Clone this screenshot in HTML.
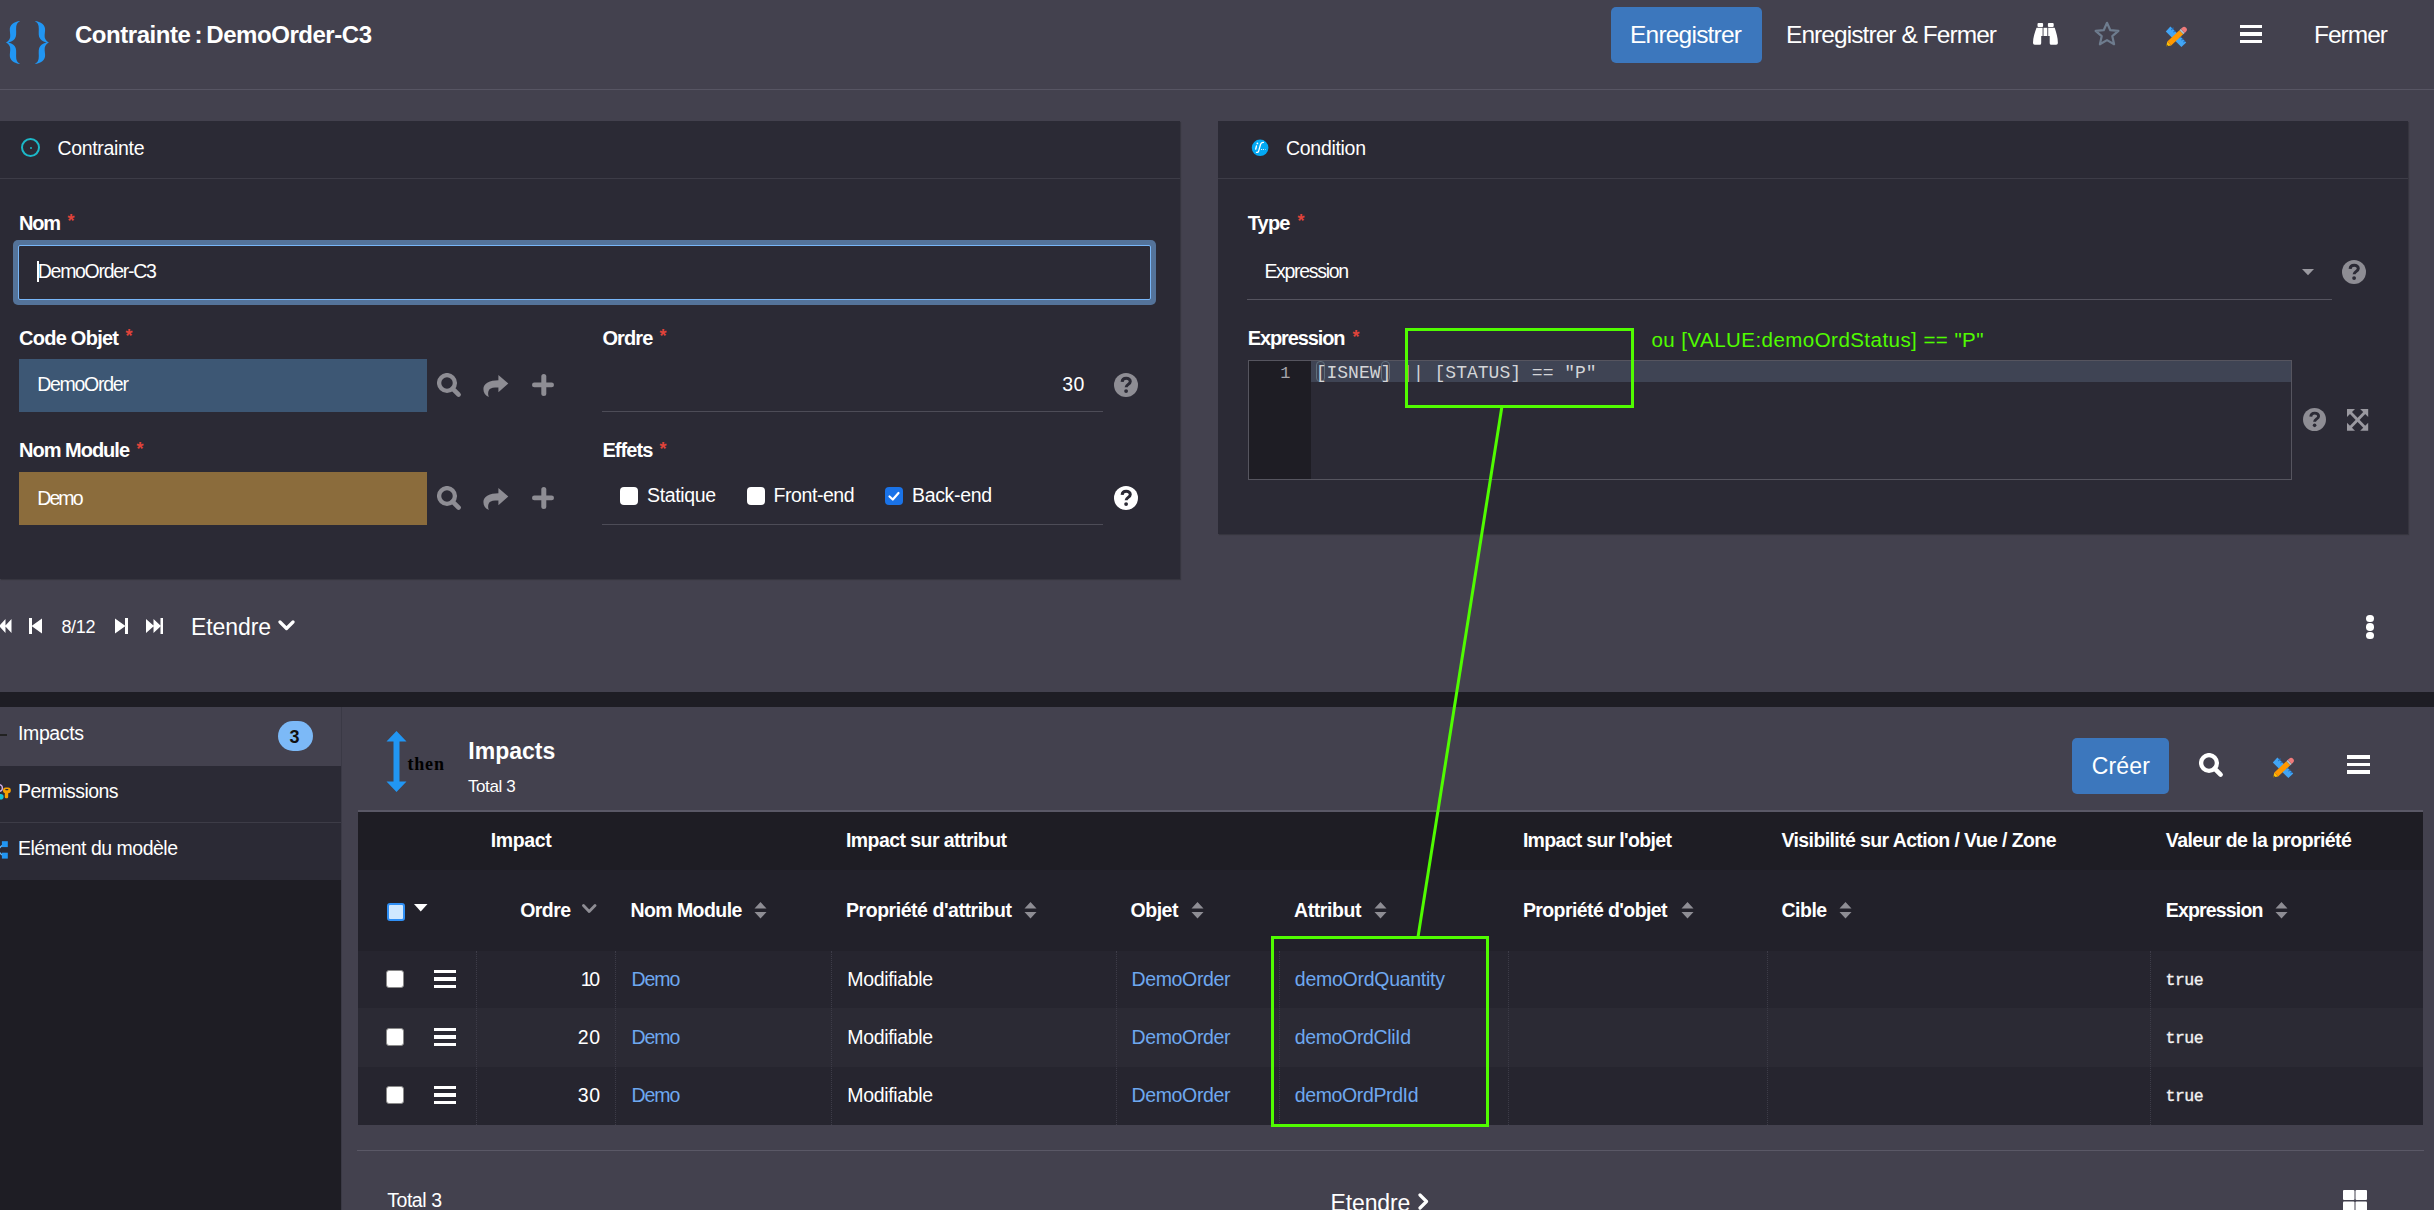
<!DOCTYPE html><html><head><meta charset="utf-8"><style>
html,body{margin:0;padding:0;width:2434px;height:1210px;overflow:hidden;background:#43414e;}
body{position:relative;font-family:"Liberation Sans",sans-serif;}
body div{position:absolute;box-sizing:border-box;}
</style></head><body>
<div style="left:0px;top:89px;width:2434px;height:1px;background:#575563;"></div>
<svg style="position:absolute;left:0px;top:0px;" width="60" height="75" viewBox="0 0 60 75"><path fill="#2196f3" d="M20.2 21 C14 21.6 9.6 24.6 9.8 30 C10 34 10.8 36.6 9.6 39 C8.6 40.8 7.2 42 5.9 42.5 C7.2 43 8.6 44.2 9.6 46 C10.8 48.4 10 51 9.8 55 C9.6 60.4 14 63.4 20.2 64 C17.4 62.8 16 60.4 16.1 56 C16.2 51.6 16.6 48.6 14.6 46 C13.2 44.2 10.6 43 8.2 42.5 C10.6 42 13.2 40.8 14.6 39 C16.6 36.4 16.2 33.4 16.1 29 C16 24.6 17.4 22.2 20.2 21Z"/><path fill="#2196f3" transform="translate(54.9,0) scale(-1,1)" d="M20.2 21 C14 21.6 9.6 24.6 9.8 30 C10 34 10.8 36.6 9.6 39 C8.6 40.8 7.2 42 5.9 42.5 C7.2 43 8.6 44.2 9.6 46 C10.8 48.4 10 51 9.8 55 C9.6 60.4 14 63.4 20.2 64 C17.4 62.8 16 60.4 16.1 56 C16.2 51.6 16.6 48.6 14.6 46 C13.2 44.2 10.6 43 8.2 42.5 C10.6 42 13.2 40.8 14.6 39 C16.6 36.4 16.2 33.4 16.1 29 C16 24.6 17.4 22.2 20.2 21Z"/></svg>
<div style="left:75.00px;top:22.68px;font-size:24px;line-height:24px;color:#fff;font-family:'Liberation Sans', sans-serif;white-space:pre;font-weight:bold;letter-spacing:-0.460px;word-spacing:-2px;">Contrainte : DemoOrder-C3</div>
<div style="left:1611px;top:7px;width:151px;height:56px;background:#3c77bd;border-radius:5px;"></div>
<div style="left:1630.00px;top:23.26px;font-size:24.5px;line-height:24.5px;color:#fff;font-family:'Liberation Sans', sans-serif;white-space:pre;letter-spacing:-0.782px;">Enregistrer</div>
<div style="left:1786.00px;top:23.26px;font-size:24.5px;line-height:24.5px;color:#fff;font-family:'Liberation Sans', sans-serif;white-space:pre;letter-spacing:-0.932px;">Enregistrer &amp; Fermer</div>
<svg style="position:absolute;left:2028px;top:18px;" width="36" height="32" viewBox="0 0 36 32"><g fill="#fff"><rect x="9.5" y="4.9" width="5.6" height="4.1" rx="1"/><rect x="19.9" y="4.9" width="5.8" height="4.1" rx="1"/>
<path d="M8.5 9.8 H14.6 V18 H13.2 V25.2 Q13.2 26.7 11.7 26.7 H6.7 Q5 26.7 5 25 C5 19.5 6.7 15 8.5 9.8Z"/>
<rect x="15.5" y="9.8" width="3.8" height="8.2"/>
<path d="M26.7 9.8 C28.3 15 29.9 19.5 29.9 25 Q29.9 26.7 28.2 26.7 H23.2 Q21.7 26.7 21.7 25.2 V18 H20.2 V9.8Z"/></g></svg>
<svg style="position:absolute;left:2093px;top:21px;" width="28" height="26" viewBox="0 0 28 26"><path fill="none" stroke="#6e7c8e" stroke-width="2.2" stroke-linejoin="round" d="M14 1.8 L17.3 9.2 L25.4 9.9 L19.3 15.2 L21.1 23.3 L14 19.1 L6.9 23.3 L8.7 15.2 L2.6 9.9 L10.7 9.2 Z"/></svg>
<svg style="position:absolute;left:2160px;top:20px;" width="32" height="32" viewBox="0 0 32 32"><path fill="#42a5f5" d="M10.4 6.6 L26.2 22.5 L21.4 27.1 L5.8 11.5Z"/>
<g stroke="#1e6fc0" stroke-width="1.1" stroke-linecap="round"><line x1="11.6" y1="9.6" x2="13.2" y2="8.0"/><line x1="13.8" y1="11.8" x2="14.8" y2="10.8"/><line x1="19.6" y1="17.6" x2="21.2" y2="16"/><line x1="21.8" y1="19.8" x2="22.8" y2="18.8"/><line x1="23.8" y1="21.8" x2="24.6" y2="21"/></g>
<g transform="translate(6.3,26.2) rotate(-42.9)"><path d="M0 0 L4 -2.8 V2.8Z" fill="#ffc107"/><path d="M0 0 L1.6 -1.1 V1.1Z" fill="#5d4a1f"/><rect x="4" y="-2.8" width="16.5" height="5.6" fill="#ff9800"/><rect x="20.5" y="-2.8" width="2" height="5.6" fill="#b0bec5"/><path d="M22.5 -2.8 H24.2 A2.8 2.8 0 0 1 24.2 2.8 H22.5Z" fill="#ef7a7a"/></g></svg>
<div style="left:2240px;top:24.60px;width:22px;height:3.6px;background:#fff;"></div>
<div style="left:2240px;top:32.10px;width:22px;height:3.6px;background:#fff;"></div>
<div style="left:2240px;top:39.60px;width:22px;height:3.6px;background:#fff;"></div>
<div style="left:2314.00px;top:23.26px;font-size:24.5px;line-height:24.5px;color:#fff;font-family:'Liberation Sans', sans-serif;white-space:pre;letter-spacing:-0.988px;">Fermer</div>
<div style="left:0px;top:121px;width:1180px;height:458px;background:#2b2a35;box-shadow:1px 1px 1px rgba(0,0,0,0.18);"></div>
<div style="left:0px;top:178px;width:1180px;height:1px;background:#3d3c47;"></div>
<div style="left:21px;top:138px;width:19px;height:19px;border:2px solid #1cb8c8;border-radius:50%;"></div>
<div style="left:29.5px;top:146.5px;width:2.5px;height:2.5px;background:#1cb8c8;border-radius:50%;"></div>
<div style="left:57.50px;top:139.49px;font-size:19.5px;line-height:19.5px;color:#fff;font-family:'Liberation Sans', sans-serif;white-space:pre;letter-spacing:-0.330px;">Contrainte</div>
<div style="left:19.00px;top:213.07px;font-size:20px;line-height:20px;color:#fff;font-family:'Liberation Sans', sans-serif;white-space:pre;font-weight:bold;letter-spacing:-1.222px;">Nom</div>
<div style="left:67.50px;top:212.26px;font-size:18px;line-height:18px;color:#e0433a;font-family:'Liberation Sans', sans-serif;white-space:pre;font-weight:bold;">*</div>
<div style="left:13px;top:240px;width:1143px;height:65px;background:#54739a;border-radius:5px;"></div>
<div style="left:18px;top:245px;width:1133px;height:55px;background:#2b2a35;border:1px solid #78b6f8;border-radius:2px;"></div>
<div style="left:37px;top:261px;width:2px;height:21px;background:#fff;"></div>
<div style="left:37.80px;top:261.79px;font-size:19.5px;line-height:19.5px;color:#fff;font-family:'Liberation Sans', sans-serif;white-space:pre;letter-spacing:-1.299px;">DemoOrder-C3</div>
<div style="left:19.00px;top:327.67px;font-size:20px;line-height:20px;color:#fff;font-family:'Liberation Sans', sans-serif;white-space:pre;font-weight:bold;letter-spacing:-0.741px;">Code Objet</div>
<div style="left:125.50px;top:326.86px;font-size:18px;line-height:18px;color:#e0433a;font-family:'Liberation Sans', sans-serif;white-space:pre;font-weight:bold;">*</div>
<div style="left:19px;top:359px;width:408px;height:53px;background:#3d5774;"></div>
<div style="left:37.20px;top:375.49px;font-size:19.5px;line-height:19.5px;color:#fff;font-family:'Liberation Sans', sans-serif;white-space:pre;letter-spacing:-1.271px;">DemoOrder</div>
<div style="left:19.00px;top:440.47px;font-size:20px;line-height:20px;color:#fff;font-family:'Liberation Sans', sans-serif;white-space:pre;font-weight:bold;letter-spacing:-0.999px;">Nom Module</div>
<div style="left:136.50px;top:439.66px;font-size:18px;line-height:18px;color:#e0433a;font-family:'Liberation Sans', sans-serif;white-space:pre;font-weight:bold;">*</div>
<div style="left:19px;top:472px;width:408px;height:53px;background:#8b6c3c;"></div>
<div style="left:37.20px;top:488.79px;font-size:19.5px;line-height:19.5px;color:#fff;font-family:'Liberation Sans', sans-serif;white-space:pre;letter-spacing:-1.873px;">Demo</div>
<svg style="position:absolute;left:437px;top:373px;" width="26" height="26" viewBox="0 0 26 26"><circle cx="10" cy="10" r="7.9" fill="none" stroke="#8e8d94" stroke-width="4.3"/><line x1="15.6" y1="15.6" x2="21.6" y2="21.6" stroke="#8e8d94" stroke-width="4.6" stroke-linecap="round"/></svg>
<svg style="position:absolute;left:483px;top:374px;" width="30" height="26" viewBox="0 0 30 26"><path fill="#8e8d94" d="M25.3 9.6 L15.4 1.1 V6.2 C7 6.2 0.4 9 0.4 15 C0.4 19 2.5 21.5 5.8 23 C4.8 20.5 4.8 17 6.5 15.2 C8 13.8 10.5 13.4 15.4 13.4 V18.2 Z"/></svg>
<svg style="position:absolute;left:531.5px;top:374px;" width="24" height="23" viewBox="0 0 24 23"><rect x="9.3" y="0" width="5" height="22" rx="2.5" fill="#8e8d94"/><rect x="0" y="8.5" width="22" height="4.8" rx="2.4" fill="#8e8d94"/></svg>
<svg style="position:absolute;left:437px;top:486px;" width="26" height="26" viewBox="0 0 26 26"><circle cx="10" cy="10" r="7.9" fill="none" stroke="#8e8d94" stroke-width="4.3"/><line x1="15.6" y1="15.6" x2="21.6" y2="21.6" stroke="#8e8d94" stroke-width="4.6" stroke-linecap="round"/></svg>
<svg style="position:absolute;left:483px;top:487px;" width="30" height="26" viewBox="0 0 30 26"><path fill="#8e8d94" d="M25.3 9.6 L15.4 1.1 V6.2 C7 6.2 0.4 9 0.4 15 C0.4 19 2.5 21.5 5.8 23 C4.8 20.5 4.8 17 6.5 15.2 C8 13.8 10.5 13.4 15.4 13.4 V18.2 Z"/></svg>
<svg style="position:absolute;left:531.5px;top:487px;" width="24" height="23" viewBox="0 0 24 23"><rect x="9.3" y="0" width="5" height="22" rx="2.5" fill="#8e8d94"/><rect x="0" y="8.5" width="22" height="4.8" rx="2.4" fill="#8e8d94"/></svg>
<div style="left:602.40px;top:327.67px;font-size:20px;line-height:20px;color:#fff;font-family:'Liberation Sans', sans-serif;white-space:pre;font-weight:bold;letter-spacing:-0.866px;">Ordre</div>
<div style="left:659.50px;top:326.86px;font-size:18px;line-height:18px;color:#e0433a;font-family:'Liberation Sans', sans-serif;white-space:pre;font-weight:bold;">*</div>
<div style="left:1062.30px;top:375.49px;font-size:19.5px;line-height:19.5px;color:#fff;font-family:'Liberation Sans', sans-serif;white-space:pre;letter-spacing:0.309px;">30</div>
<div style="left:602px;top:411px;width:501px;height:1px;background:#4d4c57;"></div>
<svg style="position:absolute;left:1112.7px;top:372.0px;" width="26" height="26" viewBox="0 0 26 26"><g transform="translate(13.0,13.0) scale(1.0)"><circle r="12" fill="#8e8d94"/><path d="M-3.9 -3.1 C-3.7 -5.5 -1.9 -6.7 0.2 -6.7 C2.6 -6.7 4.3 -5.4 4.3 -3.4 C4.3 -0.8 0.1 -0.4 0.1 2.3" fill="none" stroke="#2b2a35" stroke-width="3" stroke-linecap="butt"/><circle cx="0.1" cy="6.1" r="1.9" fill="#2b2a35"/></g></svg>
<div style="left:602.40px;top:440.47px;font-size:20px;line-height:20px;color:#fff;font-family:'Liberation Sans', sans-serif;white-space:pre;font-weight:bold;letter-spacing:-0.913px;">Effets</div>
<div style="left:659.50px;top:439.66px;font-size:18px;line-height:18px;color:#e0433a;font-family:'Liberation Sans', sans-serif;white-space:pre;font-weight:bold;">*</div>
<div style="left:620px;top:487px;width:18px;height:18px;background:#fff;border-radius:4px;"></div>
<div style="left:647.00px;top:485.69px;font-size:19.5px;line-height:19.5px;color:#fff;font-family:'Liberation Sans', sans-serif;white-space:pre;letter-spacing:-0.365px;">Statique</div>
<div style="left:747px;top:487px;width:18px;height:18px;background:#fff;border-radius:4px;"></div>
<div style="left:773.60px;top:485.69px;font-size:19.5px;line-height:19.5px;color:#fff;font-family:'Liberation Sans', sans-serif;white-space:pre;letter-spacing:-0.443px;">Front-end</div>
<div style="left:885px;top:487px;width:18px;height:18px;background:#1a73e8;border-radius:4px;"></div>
<svg style="position:absolute;left:885px;top:487px;" width="18" height="18" viewBox="0 0 18 18"><path d="M4.5 9.5 L7.8 12.5 L13.5 6" fill="none" stroke="#fff" stroke-width="2.2" stroke-linecap="round" stroke-linejoin="round"/></svg>
<div style="left:912.00px;top:485.69px;font-size:19.5px;line-height:19.5px;color:#fff;font-family:'Liberation Sans', sans-serif;white-space:pre;letter-spacing:-0.340px;">Back-end</div>
<svg style="position:absolute;left:1112.7px;top:485.0px;" width="26" height="26" viewBox="0 0 26 26"><g transform="translate(13.0,13.0) scale(1.0)"><circle r="12" fill="#fff"/><path d="M-3.9 -3.1 C-3.7 -5.5 -1.9 -6.7 0.2 -6.7 C2.6 -6.7 4.3 -5.4 4.3 -3.4 C4.3 -0.8 0.1 -0.4 0.1 2.3" fill="none" stroke="#2b2a35" stroke-width="3" stroke-linecap="butt"/><circle cx="0.1" cy="6.1" r="1.9" fill="#2b2a35"/></g></svg>
<div style="left:602px;top:524px;width:501px;height:1px;background:#4d4c57;"></div>
<div style="left:1218px;top:121px;width:1190px;height:413px;background:#2b2a35;box-shadow:1px 1px 1px rgba(0,0,0,0.18);"></div>
<div style="left:1218px;top:178px;width:1190px;height:1px;background:#3d3c47;"></div>
<svg style="position:absolute;left:1245px;top:132px;" width="35" height="30" viewBox="0 0 35 30"><circle cx="15.1" cy="15.8" r="8.3" fill="#03a9f4"/><g fill="none" stroke="#fff" stroke-linecap="round"><path d="M18.4 10.4 C16.8 10.2 15.9 11 15.5 12.5 L13.5 19.6 C13.2 20.4 12.5 20.6 11.5 20.3" stroke-width="1.3"/><path d="M11.5 13.9 L10.7 17.1" stroke-width="1.4"/></g><g fill="#fff"><circle cx="12.4" cy="11.4" r="0.9"/><circle cx="16.5" cy="17.5" r="0.6"/><circle cx="18.4" cy="17.5" r="0.6"/><circle cx="20.5" cy="17.5" r="0.5" fill-opacity="0.6"/></g></svg>
<div style="left:1286.00px;top:139.29px;font-size:19.5px;line-height:19.5px;color:#fff;font-family:'Liberation Sans', sans-serif;white-space:pre;letter-spacing:-0.299px;">Condition</div>
<div style="left:1247.70px;top:213.07px;font-size:20px;line-height:20px;color:#fff;font-family:'Liberation Sans', sans-serif;white-space:pre;font-weight:bold;letter-spacing:-0.798px;">Type</div>
<div style="left:1297.50px;top:212.26px;font-size:18px;line-height:18px;color:#e0433a;font-family:'Liberation Sans', sans-serif;white-space:pre;font-weight:bold;">*</div>
<div style="left:1264.40px;top:261.99px;font-size:19.5px;line-height:19.5px;color:#fff;font-family:'Liberation Sans', sans-serif;white-space:pre;letter-spacing:-1.296px;">Expression</div>
<div style="left:1247px;top:299px;width:1085px;height:1px;background:#55545f;"></div>
<svg style="position:absolute;left:2302px;top:269px;" width="13" height="8" viewBox="0 0 13 8"><path d="M0 0 H12 L6 6.2Z" fill="#9a99a0"/></svg>
<svg style="position:absolute;left:2341.0px;top:259.0px;" width="26" height="26" viewBox="0 0 26 26"><g transform="translate(13.0,13.0) scale(1.0)"><circle r="12" fill="#8e8d94"/><path d="M-3.9 -3.1 C-3.7 -5.5 -1.9 -6.7 0.2 -6.7 C2.6 -6.7 4.3 -5.4 4.3 -3.4 C4.3 -0.8 0.1 -0.4 0.1 2.3" fill="none" stroke="#2b2a35" stroke-width="3" stroke-linecap="butt"/><circle cx="0.1" cy="6.1" r="1.9" fill="#2b2a35"/></g></svg>
<div style="left:1247.70px;top:328.47px;font-size:20px;line-height:20px;color:#fff;font-family:'Liberation Sans', sans-serif;white-space:pre;font-weight:bold;letter-spacing:-1.114px;">Expression</div>
<div style="left:1352.50px;top:327.66px;font-size:18px;line-height:18px;color:#e0433a;font-family:'Liberation Sans', sans-serif;white-space:pre;font-weight:bold;">*</div>
<div style="left:1248px;top:360px;width:1044px;height:120px;border:1px solid #56555f;background:#2b2a35;"></div>
<div style="left:1249px;top:361px;width:62px;height:118px;background:#1e1d24;"></div>
<div style="left:1311px;top:361px;width:980px;height:21px;background:#3f4454;"></div>
<div style="left:1280.30px;top:364.98px;font-size:17px;line-height:17px;color:#a5a5ab;font-family:'Liberation Mono', monospace;white-space:pre;">1</div>
<div style="left:1315.5px;top:361px;width:9.5px;height:20.5px;border:1px solid #5f6f7c;border-radius:4px;"></div>
<div style="left:1380.5px;top:361px;width:9.5px;height:20.5px;border:1px solid #5f6f7c;border-radius:4px;"></div>
<div style="left:1315.70px;top:363.71px;font-size:18px;line-height:18px;color:#d4d5d8;font-family:'Liberation Mono', monospace;white-space:pre;letter-spacing:0.005px;">[ISNEW] || [STATUS] == &quot;P&quot;</div>
<svg style="position:absolute;left:2301.8px;top:407.3px;" width="25" height="25" viewBox="0 0 25 25"><g transform="translate(12.5,12.5) scale(0.9583333333333334)"><circle r="12" fill="#8e8d94"/><path d="M-3.9 -3.1 C-3.7 -5.5 -1.9 -6.7 0.2 -6.7 C2.6 -6.7 4.3 -5.4 4.3 -3.4 C4.3 -0.8 0.1 -0.4 0.1 2.3" fill="none" stroke="#2b2a35" stroke-width="3" stroke-linecap="butt"/><circle cx="0.1" cy="6.1" r="1.9" fill="#2b2a35"/></g></svg>
<svg style="position:absolute;left:2347px;top:409px;" width="22" height="22" viewBox="0 0 22 22"><g fill="#9a99a0"><path d="M0 0 H8 L0 8Z"/><path d="M21.2 0 V8 L13.2 0Z"/><path d="M0 21.8 V13.8 L8 21.8Z"/><path d="M21.2 21.8 H13.2 L21.2 13.8Z"/></g><g stroke="#9a99a0" stroke-width="2.8"><line x1="2.5" y1="2.5" x2="18.7" y2="19.3"/><line x1="18.7" y1="2.5" x2="2.5" y2="19.3"/></g></svg>
<svg style="position:absolute;left:0px;top:618px;left:-3px;" width="16" height="16" viewBox="0 0 16 16"><path fill="#fff" d="M0 0 H2.5 V16 H0Z M2 8 L8.5 1 V15Z M8 8 L14.5 1 V15Z"/></svg>
<svg style="position:absolute;left:29px;top:618px;" width="14" height="16" viewBox="0 0 14 16"><path fill="#fff" d="M0 0 H3 V16 H0Z M2.5 8 L13 0.5 V15.5Z"/></svg>
<svg style="position:absolute;left:114px;top:618px;" width="14" height="16" viewBox="0 0 14 16"><path fill="#fff" d="M11 0 H14 V16 H11Z M11.5 8 L1 0.5 V15.5Z"/></svg>
<svg style="position:absolute;left:143.5px;top:618px;" width="20" height="16" viewBox="0 0 20 16"><path fill="#fff" d="M16.5 0 H19 V16 H16.5Z M17 8 L9.5 1 V15Z M10 8 L2 1 V15Z"/></svg>
<div style="left:61.40px;top:618.16px;font-size:18px;line-height:18px;color:#fff;font-family:'Liberation Sans', sans-serif;white-space:pre;letter-spacing:-0.346px;">8/12</div>
<div style="left:191.00px;top:615.53px;font-size:23px;line-height:23px;color:#fff;font-family:'Liberation Sans', sans-serif;white-space:pre;letter-spacing:-0.093px;">Etendre</div>
<svg style="position:absolute;left:278px;top:620px;" width="17" height="12" viewBox="0 0 17 12"><path d="M2 2 L8.5 8.5 L15 2" fill="none" stroke="#fff" stroke-width="3.2" stroke-linecap="round" stroke-linejoin="round"/></svg>
<div style="left:2366.3px;top:614.9px;width:7.6px;height:7.6px;background:#fff;border-radius:50%;"></div>
<div style="left:2366.3px;top:623.4px;width:7.6px;height:7.6px;background:#fff;border-radius:50%;"></div>
<div style="left:2366.3px;top:631.9px;width:7.6px;height:7.6px;background:#fff;border-radius:50%;"></div>
<div style="left:0px;top:692px;width:2434px;height:15px;background:#1e1d24;"></div>
<div style="left:0px;top:707px;width:341px;height:58px;background:#43414e;"></div>
<div style="left:0px;top:766px;width:341px;height:56px;background:#2b2a35;"></div>
<div style="left:0px;top:822px;width:341px;height:1px;background:#3d3c47;"></div>
<div style="left:0px;top:823px;width:341px;height:57px;background:#2b2a35;"></div>
<div style="left:0px;top:880px;width:341px;height:330px;background:#1e1d24;"></div>
<div style="left:341px;top:707px;width:1px;height:503px;background:#3a3945;"></div>
<div style="left:18.00px;top:724.49px;font-size:19.5px;line-height:19.5px;color:#fff;font-family:'Liberation Sans', sans-serif;white-space:pre;letter-spacing:-0.379px;">Impacts</div>
<div style="left:18.00px;top:782.29px;font-size:19.5px;line-height:19.5px;color:#fff;font-family:'Liberation Sans', sans-serif;white-space:pre;letter-spacing:-0.570px;">Permissions</div>
<div style="left:18.00px;top:838.89px;font-size:19.5px;line-height:19.5px;color:#fff;font-family:'Liberation Sans', sans-serif;white-space:pre;letter-spacing:-0.501px;">Elément du modèle</div>
<div style="left:278px;top:721px;width:35px;height:30px;background:#7cb9f7;border-radius:15px;"></div>
<div style="left:289.50px;top:727.76px;font-size:18px;line-height:18px;color:#111;font-family:'Liberation Sans', sans-serif;white-space:pre;font-weight:bold;">3</div>
<svg style="position:absolute;left:0px;top:733px;" width="8" height="5" viewBox="0 0 8 5"><rect x="0" y="1" width="7" height="2" fill="#222"/></svg>
<svg style="position:absolute;left:0px;top:775px;" width="20" height="90" viewBox="0 0 20 90"><circle cx="-1" cy="13" r="3.4" fill="none" stroke="#d4b0e6" stroke-width="1.4"/><ellipse cx="0.8" cy="21.8" rx="2.8" ry="2.8" fill="#17c3d6"/>
<rect x="3" y="12.6" width="7.8" height="5.6" rx="2.6" fill="#f5a000"/><rect x="5.2" y="13.9" width="3.2" height="1.3" rx="0.6" fill="#2b2a35"/><rect x="4.8" y="17.5" width="3.4" height="5.8" rx="1.2" fill="#f5a000"/>
<rect x="1.9" y="66.2" width="5.9" height="5.9" fill="#2196f3"/><rect x="1.9" y="77.7" width="5.9" height="5.9" fill="#2196f3"/><path d="M-2 74.5 L2 70.5 M-2 76 L2 80" stroke="#64b5f6" stroke-width="1.3" fill="none"/></svg>
<svg style="position:absolute;left:386px;top:731px;" width="21" height="61" viewBox="0 0 21 61"><path fill="#2196f3" d="M10.5 0 L20.5 10.5 H13.5 V50.5 H20.5 L10.5 61 L0.5 50.5 H7.5 V10.5 H0.5Z"/></svg>
<div style="left:407.40px;top:754.93px;font-size:18px;line-height:18px;color:#000;font-family:'Liberation Serif', serif;white-space:pre;font-weight:bold;letter-spacing:0.864px;">then</div>
<div style="left:468.30px;top:739.93px;font-size:23px;line-height:23px;color:#fff;font-family:'Liberation Sans', sans-serif;white-space:pre;font-weight:bold;letter-spacing:0.013px;">Impacts</div>
<div style="left:468.00px;top:777.61px;font-size:17px;line-height:17px;color:#fff;font-family:'Liberation Sans', sans-serif;white-space:pre;letter-spacing:-0.415px;">Total 3</div>
<div style="left:2072px;top:738px;width:97px;height:56px;background:#3c77bd;border-radius:5px;"></div>
<div style="left:2091.80px;top:754.93px;font-size:23px;line-height:23px;color:#fff;font-family:'Liberation Sans', sans-serif;white-space:pre;letter-spacing:0.122px;">Créer</div>
<svg style="position:absolute;left:2198.5px;top:752.5px;" width="26" height="26" viewBox="0 0 26 26"><circle cx="10" cy="10" r="7.9" fill="none" stroke="#fff" stroke-width="4.3"/><line x1="15.6" y1="15.6" x2="21.6" y2="21.6" stroke="#fff" stroke-width="4.6" stroke-linecap="round"/></svg>
<svg style="position:absolute;left:2267px;top:751px;" width="32" height="32" viewBox="0 0 32 32"><path fill="#42a5f5" d="M10.4 6.6 L26.2 22.5 L21.4 27.1 L5.8 11.5Z"/>
<g stroke="#1e6fc0" stroke-width="1.1" stroke-linecap="round"><line x1="11.6" y1="9.6" x2="13.2" y2="8.0"/><line x1="13.8" y1="11.8" x2="14.8" y2="10.8"/><line x1="19.6" y1="17.6" x2="21.2" y2="16"/><line x1="21.8" y1="19.8" x2="22.8" y2="18.8"/><line x1="23.8" y1="21.8" x2="24.6" y2="21"/></g>
<g transform="translate(6.3,26.2) rotate(-42.9)"><path d="M0 0 L4 -2.8 V2.8Z" fill="#ffc107"/><path d="M0 0 L1.6 -1.1 V1.1Z" fill="#5d4a1f"/><rect x="4" y="-2.8" width="16.5" height="5.6" fill="#ff9800"/><rect x="20.5" y="-2.8" width="2" height="5.6" fill="#b0bec5"/><path d="M22.5 -2.8 H24.2 A2.8 2.8 0 0 1 24.2 2.8 H22.5Z" fill="#ef7a7a"/></g></svg>
<div style="left:2347px;top:755.00px;width:22.5px;height:3.6px;background:#fff;"></div>
<div style="left:2347px;top:762.50px;width:22.5px;height:3.6px;background:#fff;"></div>
<div style="left:2347px;top:770.00px;width:22.5px;height:3.6px;background:#fff;"></div>
<div style="left:358px;top:810px;width:2065px;height:2px;background:#5a5866;"></div>
<div style="left:358px;top:812px;width:2065px;height:58px;background:#1e1d24;"></div>
<div style="left:358px;top:870px;width:2065px;height:81px;background:#22212a;"></div>
<div style="left:358px;top:951px;width:2065px;height:57px;background:#26252f;"></div>
<div style="left:358px;top:1008px;width:2065px;height:59px;background:#2b2a34;"></div>
<div style="left:358px;top:1067px;width:2065px;height:58px;background:#26252f;"></div>
<div style="left:476px;top:951px;width:0;height:174px;border-left:1px dotted #3d3c48;"></div>
<div style="left:615px;top:951px;width:0;height:174px;border-left:1px dotted #3d3c48;"></div>
<div style="left:831px;top:951px;width:0;height:174px;border-left:1px dotted #3d3c48;"></div>
<div style="left:1116px;top:951px;width:0;height:174px;border-left:1px dotted #3d3c48;"></div>
<div style="left:1279px;top:951px;width:0;height:174px;border-left:1px dotted #3d3c48;"></div>
<div style="left:1508px;top:951px;width:0;height:174px;border-left:1px dotted #3d3c48;"></div>
<div style="left:1767px;top:951px;width:0;height:174px;border-left:1px dotted #3d3c48;"></div>
<div style="left:2150px;top:951px;width:0;height:174px;border-left:1px dotted #3d3c48;"></div>
<div style="left:490.80px;top:831.49px;font-size:19.5px;line-height:19.5px;color:#fff;font-family:'Liberation Sans', sans-serif;white-space:pre;font-weight:bold;letter-spacing:-0.371px;">Impact</div>
<div style="left:846.00px;top:831.49px;font-size:19.5px;line-height:19.5px;color:#fff;font-family:'Liberation Sans', sans-serif;white-space:pre;font-weight:bold;letter-spacing:-0.566px;">Impact sur attribut</div>
<div style="left:1522.90px;top:831.49px;font-size:19.5px;line-height:19.5px;color:#fff;font-family:'Liberation Sans', sans-serif;white-space:pre;font-weight:bold;letter-spacing:-0.687px;">Impact sur l&#x27;objet</div>
<div style="left:1781.50px;top:831.49px;font-size:19.5px;line-height:19.5px;color:#fff;font-family:'Liberation Sans', sans-serif;white-space:pre;font-weight:bold;letter-spacing:-0.609px;">Visibilité sur Action / Vue / Zone</div>
<div style="left:2165.80px;top:831.49px;font-size:19.5px;line-height:19.5px;color:#fff;font-family:'Liberation Sans', sans-serif;white-space:pre;font-weight:bold;letter-spacing:-0.587px;">Valeur de la propriété</div>
<div style="left:387px;top:902.5px;width:18px;height:18px;background:#cfe8ff;border:2.5px solid #2f8ff5;border-radius:3px;"></div>
<svg style="position:absolute;left:414px;top:904px;" width="14" height="8" viewBox="0 0 14 8"><path d="M0 0 H13.5 L6.75 7.5Z" fill="#fff"/></svg>
<div style="left:520.30px;top:901.09px;font-size:19.5px;line-height:19.5px;color:#fff;font-family:'Liberation Sans', sans-serif;white-space:pre;font-weight:bold;letter-spacing:-0.600px;">Ordre</div>
<svg style="position:absolute;left:582px;top:904px;" width="15" height="10" viewBox="0 0 15 10"><path d="M1.5 1.5 L7.2 7.5 L13 1.5" fill="none" stroke="#8e8d94" stroke-width="2.8" stroke-linecap="round" stroke-linejoin="round"/></svg>
<div style="left:630.40px;top:901.09px;font-size:19.5px;line-height:19.5px;color:#fff;font-family:'Liberation Sans', sans-serif;white-space:pre;font-weight:bold;letter-spacing:-0.555px;">Nom Module</div>
<svg style="position:absolute;left:753.5px;top:901.5px;" width="13" height="17" viewBox="0 0 13 17"><path fill="#8e8d94" d="M6.5 0 L12.5 6.5 H0.5Z M6.5 16.5 L12.5 10 H0.5Z"/></svg>
<div style="left:846.00px;top:901.09px;font-size:19.5px;line-height:19.5px;color:#fff;font-family:'Liberation Sans', sans-serif;white-space:pre;font-weight:bold;letter-spacing:-0.460px;">Propriété d&#x27;attribut</div>
<svg style="position:absolute;left:1023.5px;top:901.5px;" width="13" height="17" viewBox="0 0 13 17"><path fill="#8e8d94" d="M6.5 0 L12.5 6.5 H0.5Z M6.5 16.5 L12.5 10 H0.5Z"/></svg>
<div style="left:1130.50px;top:901.09px;font-size:19.5px;line-height:19.5px;color:#fff;font-family:'Liberation Sans', sans-serif;white-space:pre;font-weight:bold;letter-spacing:-0.459px;">Objet</div>
<svg style="position:absolute;left:1191px;top:901.5px;" width="13" height="17" viewBox="0 0 13 17"><path fill="#8e8d94" d="M6.5 0 L12.5 6.5 H0.5Z M6.5 16.5 L12.5 10 H0.5Z"/></svg>
<div style="left:1294.00px;top:901.09px;font-size:19.5px;line-height:19.5px;color:#fff;font-family:'Liberation Sans', sans-serif;white-space:pre;font-weight:bold;letter-spacing:-0.428px;">Attribut</div>
<svg style="position:absolute;left:1373.5px;top:901.5px;" width="13" height="17" viewBox="0 0 13 17"><path fill="#8e8d94" d="M6.5 0 L12.5 6.5 H0.5Z M6.5 16.5 L12.5 10 H0.5Z"/></svg>
<div style="left:1522.90px;top:901.09px;font-size:19.5px;line-height:19.5px;color:#fff;font-family:'Liberation Sans', sans-serif;white-space:pre;font-weight:bold;letter-spacing:-0.591px;">Propriété d&#x27;objet</div>
<svg style="position:absolute;left:1680.5px;top:901.5px;" width="13" height="17" viewBox="0 0 13 17"><path fill="#8e8d94" d="M6.5 0 L12.5 6.5 H0.5Z M6.5 16.5 L12.5 10 H0.5Z"/></svg>
<div style="left:1781.50px;top:901.09px;font-size:19.5px;line-height:19.5px;color:#fff;font-family:'Liberation Sans', sans-serif;white-space:pre;font-weight:bold;letter-spacing:-0.494px;">Cible</div>
<svg style="position:absolute;left:1838.5px;top:901.5px;" width="13" height="17" viewBox="0 0 13 17"><path fill="#8e8d94" d="M6.5 0 L12.5 6.5 H0.5Z M6.5 16.5 L12.5 10 H0.5Z"/></svg>
<div style="left:2165.80px;top:901.09px;font-size:19.5px;line-height:19.5px;color:#fff;font-family:'Liberation Sans', sans-serif;white-space:pre;font-weight:bold;letter-spacing:-0.837px;">Expression</div>
<svg style="position:absolute;left:2275px;top:901.5px;" width="13" height="17" viewBox="0 0 13 17"><path fill="#8e8d94" d="M6.5 0 L12.5 6.5 H0.5Z M6.5 16.5 L12.5 10 H0.5Z"/></svg>
<div style="left:386px;top:970px;width:18px;height:18px;background:#fff;border:1px solid #8a8a8a;border-radius:3px;"></div>
<div style="left:434px;top:969.80px;width:22px;height:3.5px;background:#fff;"></div>
<div style="left:434px;top:977.35px;width:22px;height:3.5px;background:#fff;"></div>
<div style="left:434px;top:984.90px;width:22px;height:3.5px;background:#fff;"></div>
<div style="left:580.70px;top:969.99px;font-size:19.5px;line-height:19.5px;color:#fff;font-family:'Liberation Sans', sans-serif;white-space:pre;letter-spacing:-2.191px;">10</div>
<div style="left:631.40px;top:969.99px;font-size:19.5px;line-height:19.5px;color:#6ea8ef;font-family:'Liberation Sans', sans-serif;white-space:pre;letter-spacing:-1.006px;">Demo</div>
<div style="left:847.30px;top:969.99px;font-size:19.5px;line-height:19.5px;color:#fff;font-family:'Liberation Sans', sans-serif;white-space:pre;letter-spacing:-0.354px;">Modifiable</div>
<div style="left:1131.50px;top:969.99px;font-size:19.5px;line-height:19.5px;color:#6ea8ef;font-family:'Liberation Sans', sans-serif;white-space:pre;letter-spacing:-0.358px;">DemoOrder</div>
<div style="left:1294.80px;top:969.99px;font-size:19.5px;line-height:19.5px;color:#6ea8ef;font-family:'Liberation Sans', sans-serif;white-space:pre;letter-spacing:-0.265px;">demoOrdQuantity</div>
<div style="left:2165.60px;top:973.06px;font-size:16.5px;line-height:16.5px;color:#f2f2f2;font-family:'Liberation Mono', monospace;white-space:pre;letter-spacing:-0.536px;-webkit-text-stroke:0.35px #f2f2f2;">true</div>
<div style="left:386px;top:1028px;width:18px;height:18px;background:#fff;border:1px solid #8a8a8a;border-radius:3px;"></div>
<div style="left:434px;top:1027.80px;width:22px;height:3.5px;background:#fff;"></div>
<div style="left:434px;top:1035.35px;width:22px;height:3.5px;background:#fff;"></div>
<div style="left:434px;top:1042.90px;width:22px;height:3.5px;background:#fff;"></div>
<div style="left:577.70px;top:1027.99px;font-size:19.5px;line-height:19.5px;color:#fff;font-family:'Liberation Sans', sans-serif;white-space:pre;letter-spacing:0.809px;">20</div>
<div style="left:631.40px;top:1027.99px;font-size:19.5px;line-height:19.5px;color:#6ea8ef;font-family:'Liberation Sans', sans-serif;white-space:pre;letter-spacing:-1.006px;">Demo</div>
<div style="left:847.30px;top:1027.99px;font-size:19.5px;line-height:19.5px;color:#fff;font-family:'Liberation Sans', sans-serif;white-space:pre;letter-spacing:-0.354px;">Modifiable</div>
<div style="left:1131.50px;top:1027.99px;font-size:19.5px;line-height:19.5px;color:#6ea8ef;font-family:'Liberation Sans', sans-serif;white-space:pre;letter-spacing:-0.358px;">DemoOrder</div>
<div style="left:1294.80px;top:1027.99px;font-size:19.5px;line-height:19.5px;color:#6ea8ef;font-family:'Liberation Sans', sans-serif;white-space:pre;letter-spacing:-0.373px;">demoOrdCliId</div>
<div style="left:2165.60px;top:1031.06px;font-size:16.5px;line-height:16.5px;color:#f2f2f2;font-family:'Liberation Mono', monospace;white-space:pre;letter-spacing:-0.536px;-webkit-text-stroke:0.35px #f2f2f2;">true</div>
<div style="left:386px;top:1086px;width:18px;height:18px;background:#fff;border:1px solid #8a8a8a;border-radius:3px;"></div>
<div style="left:434px;top:1085.80px;width:22px;height:3.5px;background:#fff;"></div>
<div style="left:434px;top:1093.35px;width:22px;height:3.5px;background:#fff;"></div>
<div style="left:434px;top:1100.90px;width:22px;height:3.5px;background:#fff;"></div>
<div style="left:577.70px;top:1085.99px;font-size:19.5px;line-height:19.5px;color:#fff;font-family:'Liberation Sans', sans-serif;white-space:pre;letter-spacing:0.809px;">30</div>
<div style="left:631.40px;top:1085.99px;font-size:19.5px;line-height:19.5px;color:#6ea8ef;font-family:'Liberation Sans', sans-serif;white-space:pre;letter-spacing:-1.006px;">Demo</div>
<div style="left:847.30px;top:1085.99px;font-size:19.5px;line-height:19.5px;color:#fff;font-family:'Liberation Sans', sans-serif;white-space:pre;letter-spacing:-0.354px;">Modifiable</div>
<div style="left:1131.50px;top:1085.99px;font-size:19.5px;line-height:19.5px;color:#6ea8ef;font-family:'Liberation Sans', sans-serif;white-space:pre;letter-spacing:-0.358px;">DemoOrder</div>
<div style="left:1294.80px;top:1085.99px;font-size:19.5px;line-height:19.5px;color:#6ea8ef;font-family:'Liberation Sans', sans-serif;white-space:pre;letter-spacing:-0.382px;">demoOrdPrdId</div>
<div style="left:2165.60px;top:1089.06px;font-size:16.5px;line-height:16.5px;color:#f2f2f2;font-family:'Liberation Mono', monospace;white-space:pre;letter-spacing:-0.536px;-webkit-text-stroke:0.35px #f2f2f2;">true</div>
<div style="left:357px;top:1150px;width:2067px;height:1px;background:#5a5866;"></div>
<div style="left:387.20px;top:1191.49px;font-size:19.5px;line-height:19.5px;color:#fff;font-family:'Liberation Sans', sans-serif;white-space:pre;letter-spacing:-0.443px;">Total 3</div>
<div style="left:1330.40px;top:1191.53px;font-size:23px;line-height:23px;color:#fff;font-family:'Liberation Sans', sans-serif;white-space:pre;letter-spacing:-0.093px;">Etendre</div>
<svg style="position:absolute;left:1418px;top:1193px;" width="11" height="17" viewBox="0 0 11 17"><path d="M2 2 L8.5 8.5 L2 15" fill="none" stroke="#fff" stroke-width="3.2" stroke-linecap="round" stroke-linejoin="round"/></svg>
<svg style="position:absolute;left:2343px;top:1190px;" width="25" height="20" viewBox="0 0 25 20"><g fill="#fff"><rect x="0" y="0" width="11.5" height="10" rx="1"/><rect x="12.5" y="0" width="11.5" height="10" rx="1"/><rect x="0" y="11.5" width="11.5" height="10" rx="1"/><rect x="12.5" y="11.5" width="11.5" height="10" rx="1"/></g></svg>
<div style="left:1405px;top:328px;width:229px;height:80px;border:3px solid #50fc00;"></div>
<div style="left:1651.50px;top:329.94px;font-size:20.5px;line-height:20.5px;color:#50fc00;font-family:'Liberation Sans', sans-serif;white-space:pre;letter-spacing:0.453px;">ou [VALUE:demoOrdStatus] == &quot;P&quot;</div>
<div style="left:1271px;top:936px;width:218px;height:191px;border:3px solid #50fc00;"></div>
<svg style="position:absolute;left:0px;top:0px;pointer-events:none;" width="2434" height="1210" viewBox="0 0 2434 1210"><line x1="1502" y1="406" x2="1418" y2="937" stroke="#50fc00" stroke-width="3"/></svg>
</body></html>
